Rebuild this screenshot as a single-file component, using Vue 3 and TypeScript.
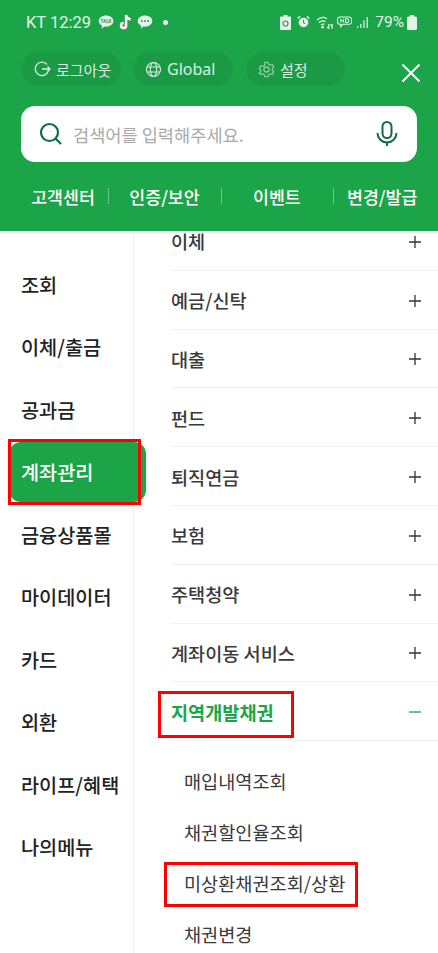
<script setup lang="ts">
const pills = [
  { key: 'logout', label: '로그아웃' },
  { key: 'global', label: 'Global' },
  { key: 'settings', label: '설정' },
]
const links = ['고객센터', '인증/보안', '이벤트', '변경/발급']
const sideMenu = ['조회', '이체/출금', '공과금', '계좌관리', '금융상품몰', '마이데이터', '카드', '외환', '라이프/혜택', '나의메뉴']
const subMenu = ['이체', '예금/신탁', '대출', '펀드', '퇴직연금', '보험', '주택청약', '계좌이동 서비스']
const children = ['매입내역조회', '채권할인율조회', '미상환채권조회/상환', '채권변경']
</script>

<template>
  <div class="screen">
    <header class="header">
      <div class="status">
        <div class="status__left">
          <span class="status__time">KT 12:29</span>
          <svg width="16" height="16" viewBox="0 0 16 16"><path d="M8 1.500c4 0 7.300 2.400 7.300 5.600S12 12.700 8 12.700c-.6 0-1.100 0-1.600-.1L3.500 14.800l.5-3.200C2 10.600.7 9 .7 7.100.7 3.900 4 1.500 8 1.500z" fill="#e6f3ea"/><text x="8" y="8.800" text-anchor="middle" font-size="4.600" font-weight="700" font-family="Roboto, sans-serif" fill="#1ca548">TALK</text></svg>
          <svg width="15" height="17" viewBox="0 0 15 17"><path d="M8 1v10.500a2.500 2.500 0 1 1-2.500-2.500M8 1c.3 2.500 2 4 4.500 4.200" fill="none" stroke="#f25a7a" stroke-width="2.400" transform="translate(.8 .4)"/><path d="M8 1v10.500a2.500 2.500 0 1 1-2.500-2.500M8 1c.3 2.500 2 4 4.500 4.200" fill="none" stroke="#fff" stroke-width="2.400"/></svg>
          <svg width="16" height="16" viewBox="0 0 16 16"><path d="M8 1.500c4 0 7.300 2.400 7.300 5.600S12 12.700 8 12.700c-.6 0-1.100 0-1.600-.1L4 14.800l.3-3.100C2.100 10.700.7 9 .7 7.100.7 3.900 4 1.500 8 1.500z" fill="#e6f3ea"/><circle cx="4.800" cy="7.100" r="1" fill="#1ca548"/><circle cx="8" cy="7.100" r="1" fill="#1ca548"/><circle cx="11.200" cy="7.100" r="1" fill="#1ca548"/></svg>
          <span class="status__dot"></span>
        </div>
        <div class="status__right">
          <svg width="11" height="15" viewBox="0 0 11 15"><path d="M3.500 0h4v1.500H10a1 1 0 0 1 1 1V14a1 1 0 0 1-1 1H1a1 1 0 0 1-1-1V2.500a1 1 0 0 1 1-1h2.500z" fill="#e6f3ea"/><circle cx="5.500" cy="8.500" r="2.500" fill="none" stroke="#1ca548" stroke-width="1.200"/></svg>
          <svg class="status__alarm" width="13" height="14" viewBox="0 0 15 15"><circle cx="7.500" cy="8" r="5.500" fill="#e6f3ea"/><path d="M7.500 5v3.200l2 1.200" fill="none" stroke="#1ca548" stroke-width="1.200"/><path d="M.8 3.500 3.500.8M14.200 3.500 11.500.8" stroke="#e6f3ea" stroke-width="1.800"/></svg>
          <svg class="status__wifi" width="18" height="15" viewBox="0 0 19 15" fill="none" stroke="#e6f3ea" stroke-width="1.300"><path d="M1 5c3.500-3.200 7.500-3.400 10.500-1.500M3 7.600c2.400-2 5-2.100 7-1M5.200 10c1.200-.9 2.500-1 3.600-.5"/><circle cx="7" cy="12.500" r=".8" fill="#e6f3ea"/><path d="M13.500 9v5M11.800 12.300l1.700 1.700M17 14V9M15.300 10.700 17 9"/></svg>
          <svg class="status__hd" width="15" height="13" viewBox="0 0 16 14" fill="none" stroke="#e6f3ea" stroke-width="1.100"><path d="M3 1h10a2.500 2.500 0 0 1 2.500 2.500v3A2.500 2.500 0 0 1 13 9H6l-2 2.500V9H3A2.500 2.500 0 0 1 .5 6.500v-3A2.500 2.500 0 0 1 3 1z"/><path d="M4 3v4M7 3v4M4 5h3M9.200 3v4h1.500a1.800 2 0 0 0 0-4z"/></svg>
          <svg class="status__signal" width="11" height="13" viewBox="0 0 12 14" fill="#e6f3ea"><rect x="0" y="11" width="1.300" height="2"/><rect x="3.500" y="8.500" width="1.300" height="4.500"/><rect x="7" y="4.500" width="1.300" height="8.500"/><rect x="10.500" y="1" width="1.300" height="12"/></svg>
          <span class="status__pct">79%</span>
          <svg width="10" height="15" viewBox="0 0 10 15"><path d="M3 0h4v1.500h1.500a1.500 1.500 0 0 1 1.500 1.500v10.500A1.500 1.500 0 0 1 8.500 15h-7A1.500 1.500 0 0 1 0 13.500V3a1.500 1.500 0 0 1 1.500-1.500H3z" fill="#e6f3ea"/></svg>
        </div>
      </div>

      <div class="pills">
        <a v-for="pill in pills" :key="pill.key" class="pill" :class="`pill--${pill.key}`">
          <svg v-if="pill.key === 'logout'" width="18" height="18" viewBox="0 0 18 18" fill="none" stroke="#dceee2" stroke-width="1.300"><path d="M14 4.500A6.700 6.700 0 1 0 15.300 11"/><path d="M9 9h8M14.500 6.500 17 9l-2.500 2.500"/></svg>
          <svg v-else-if="pill.key === 'global'" width="17" height="17" viewBox="0 0 17 17" fill="none" stroke="#dceee2" stroke-width="1.100"><circle cx="8.500" cy="8.500" r="7"/><ellipse cx="8.500" cy="8.500" rx="3.200" ry="7"/><path d="M2 6h13M2 11h13"/></svg>
          <svg v-else width="17" height="17" viewBox="0 0 17 17" fill="none" stroke="#9fd3b0" stroke-width="1.100"><circle cx="8.500" cy="8.500" r="2.600"/><path d="M7 1.200h3l.5 2 1.800 1 2-.6 1.500 2.600-1.500 1.400v1.800l1.500 1.400-1.500 2.600-2-.6-1.800 1-.5 2H7l-.5-2-1.800-1-2 .6L1.200 12l1.500-1.400V8.800L1.200 7.400l1.500-2.600 2 .6 1.800-1z"/></svg>
          <span>{{ pill.label }}</span>
        </a>
        <svg class="close" width="20" height="20" viewBox="0 0 20 20" fill="none" stroke="#fff" stroke-width="2"><path d="M1.500 1.500l17 17M18.500 1.500l-17 17"/></svg>
      </div>

      <div class="search">
        <svg width="24" height="24" viewBox="0 0 24 24" fill="none" stroke="#14694a" stroke-width="2.200"><circle cx="10.500" cy="10.500" r="8.500"/><path d="M16.800 16.800 22 22"/></svg>
        <span class="search__hint">검색어를 입력해주세요.</span>
        <svg class="search__mic" width="22" height="26" viewBox="0 0 22 26" fill="none" stroke="#14694a" stroke-width="2"><rect x="6.500" y="1" width="9" height="16" rx="4.500"/><path d="M1.500 12a9.500 9.500 0 0 0 19 0M11 21.500V25"/></svg>
      </div>

      <nav class="links">
        <template v-for="(link, index) in links" :key="link">
          <span v-if="index > 0" class="links__bar"></span>
          <a class="links__item">{{ link }}</a>
        </template>
      </nav>
    </header>

    <main class="body">
      <ul class="side">
        <li v-for="item in sideMenu" :key="item" class="side__item" :class="{ 'side__item--on': item === '계좌관리' }">{{ item }}</li>
      </ul>
      <div class="detail">
        <div v-for="item in subMenu" :key="item" class="row">
          <span>{{ item }}</span>
          <svg width="12" height="12" viewBox="0 0 12 12" stroke="#333" stroke-width="1.300"><path d="M6 0v12M0 6h12"/></svg>
        </div>
        <div class="row row--open">
          <span>지역개발채권</span>
          <svg width="12" height="12" viewBox="0 0 12 12" stroke="#1ca548" stroke-width="1.300"><path d="M0 6h12"/></svg>
        </div>
        <ul class="children">
          <li v-for="child in children" :key="child" class="children__item">{{ child }}</li>
        </ul>
      </div>
    </main>

    <!-- annotations drawn over the capture -->
    <div class="mark mark--side"></div>
    <div class="mark mark--open"></div>
    <div class="mark mark--child"></div>
  </div>
</template>

<style scoped>
.screen {
  position: relative;
  width: 438px;
  height: 953px;
  overflow: hidden;
  background: #fff;
  font-family: "Noto Sans CJK KR", "Noto Sans", sans-serif;
  color: #2b2b2b;
}

.header {
  height: 231px;
  box-sizing: border-box;
  padding: 0 21px;
  background: #1ca548;
  color: #fff;
}

.status {
  display: flex;
  justify-content: space-between;
  align-items: center;
  height: 44px;
  margin-left: 5px;
  color: #e6f3ea;
  font-family: Roboto, sans-serif;
  font-size: 16.500px;
}

.status__left,
.status__right {
  display: flex;
  align-items: center;
}

.status__left {
  gap: 4px;
}

.status__time {
  margin-right: 3px;
}

.status__dot {
  width: 5px;
  height: 5px;
  margin-left: 6px;
  border-radius: 50%;
  background: #e6f3ea;
}

.status__alarm {
  margin-left: 6px;
}

.status__wifi {
  margin-left: 6px;
}

.status__hd {
  margin-left: 3px;
}

.status__signal {
  margin-left: 5px;
}

.status__pct {
  margin: 0 3px 0 7px;
  font-size: 15.500px;
}

.pills {
  display: flex;
  align-items: center;
  gap: 12px;
  margin-top: 8px;
  height: 34px;
}

.pill {
  display: flex;
  flex: none;
  align-items: center;
  gap: 5px;
  width: 100px;
  height: 34px;
  box-sizing: border-box;
  padding-left: 12px;
  border-radius: 17px;
  background: #1a9a44;
  color: #dceee2;
  font-size: 15px;
  white-space: nowrap;
}

.pill--global {
  font-size: 16px;
  font-family: "Noto Sans", sans-serif;
}

.pill--settings {
  width: 99px;
  margin-left: 1px;
}

.close {
  margin: 8px -4px 0 auto;
}

.search {
  display: flex;
  align-items: center;
  height: 56px;
  box-sizing: border-box;
  margin-top: 20px;
  padding: 0 23px 0 18px;
  border-radius: 14px;
  background: #fff;
}

.search__hint {
  margin-left: 10px;
  color: #a9a9a9;
  font-size: 17.600px;
}

.search__mic {
  margin-left: auto;
  margin-right: -4px;
}

.links {
  display: flex;
  align-items: center;
  height: 30px;
  margin: 19px -17px 0 10px;
  font-size: 17.300px;
  font-weight: 500;
}

.links__item {
  flex: none;
  text-align: center;
  white-space: nowrap;
}

.links__bar {
  flex: none;
  width: 1px;
  height: 16px;
  background: #6fc78c;
}

.links__item:nth-of-type(1) {
  width: 64px;
  margin-right: 13px;
}

.links__item:nth-of-type(2) {
  width: 71px;
  margin: 0 21px 0 20px;
}

.links__item:nth-of-type(3) {
  width: 47px;
  margin: 0 33px 0 31px;
}

.links__item:nth-of-type(4) {
  width: 70px;
  margin-left: 13px;
}

.body {
  display: flex;
  height: 722px;
  overflow: hidden;
}

.side {
  flex: none;
  width: 134px;
  box-sizing: border-box;
  margin: 0;
  padding: 22px 0 0;
  list-style: none;
  border-right: 1px solid #f0f0f0;
}

.side__item {
  display: flex;
  align-items: center;
  height: 62.500px;
  padding-left: 21px;
  font-size: 19.700px;
  font-weight: 500;
  color: #222;
  white-space: nowrap;
}

.side__item--on {
  position: relative;
  width: 137px;
  height: 60px;
  margin: 1px 0 1.500px 9px;
  padding-left: 12px;
  box-sizing: border-box;
  border-radius: 12px;
  background: #1ca548;
  color: #fff;
}

.detail {
  flex: 1;
  min-width: 0;
  margin-top: -19px;
  padding-left: 37px;
}

.row {
  display: flex;
  justify-content: space-between;
  align-items: center;
  height: 58.800px;
  box-sizing: border-box;
  padding-right: 17px;
  border-bottom: 1px solid #f1f1f1;
  font-size: 18.600px;
  font-weight: 500;
  color: #3a3a3a;
}

.row svg {
  margin-top: 2px;
}

.row--open {
  color: #1ca548;
  font-weight: 700;
}

.children {
  margin: 0;
  padding: 14px 0 0 13px;
  list-style: none;
}

.children__item {
  display: flex;
  align-items: center;
  height: 51px;
  font-size: 18.600px;
  color: #3a3a3a;
}

.mark {
  position: absolute;
  box-sizing: border-box;
  border: 3px solid #f00;
}

.mark--side {
  left: 8px;
  top: 439px;
  width: 133px;
  height: 66px;
}

.mark--open {
  left: 158px;
  top: 691px;
  width: 136px;
  height: 47px;
}

.mark--child {
  left: 164px;
  top: 862px;
  width: 194px;
  height: 45px;
}
</style>
